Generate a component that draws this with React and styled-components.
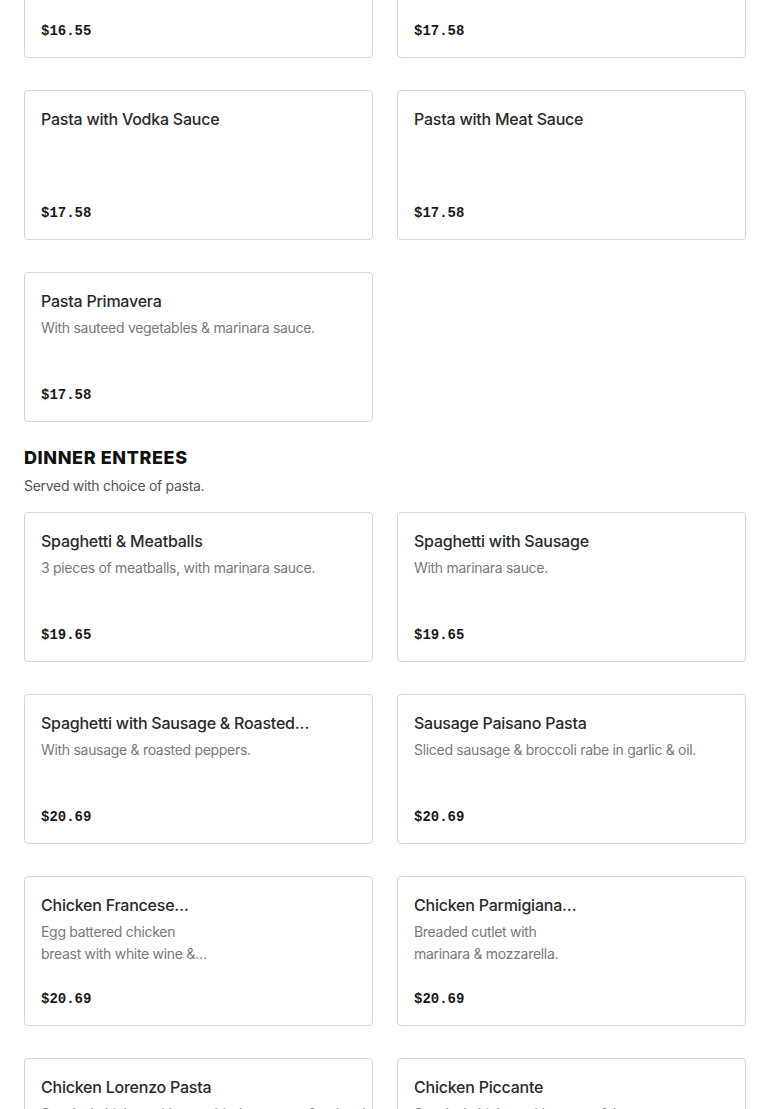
import React from 'react'
import styled, { createGlobalStyle } from 'styled-components'

const GlobalStyle = createGlobalStyle`
  body{
    margin:0;
    background:#fff;
    font-family:Inter, "Noto Sans", sans-serif;
    color:#191919;
  }
`;

const pastas = [
  { title: 'Pasta with Garlic & Oil', desc: '', price: '$16.55' },
  { title: 'Pasta with Marinara Sauce', desc: '', price: '$17.58' },
  { title: 'Pasta with Vodka Sauce', desc: '', price: '$17.58' },
  { title: 'Pasta with Meat Sauce', desc: '', price: '$17.58' },
  { title: 'Pasta Primavera', desc: 'With sauteed vegetables & marinara sauce.', price: '$17.58' },
]

const entrees = [
  { title: 'Spaghetti & Meatballs', desc: '3 pieces of meatballs, with marinara sauce.', price: '$19.65' },
  { title: 'Spaghetti with Sausage', desc: 'With marinara sauce.', price: '$19.65' },
  { title: 'Spaghetti with Sausage & Roasted…', desc: 'With sausage & roasted peppers.', price: '$20.69' },
  { title: 'Sausage Paisano Pasta', desc: 'Sliced sausage & broccoli rabe in garlic & oil.', price: '$20.69' },
  { title: 'Chicken Francese…', desc: ['Egg battered chicken', 'breast with white wine &…'], price: '$20.69' },
  { title: 'Chicken Parmigiana…', desc: ['Breaded cutlet with', 'marinara & mozzarella.'], price: '$20.69' },
  { title: 'Chicken Lorenzo Pasta', desc: 'Sautéed chicken with sun-dried tomatoes & spinach.', price: '$20.69' },
  { title: 'Chicken Piccante', desc: 'Sautéed chicken with capers & lemon sauce.', price: '$20.69' },
]

function ItemCard({ item }) {
  const lines = Array.isArray(item.desc) ? item.desc : item.desc ? [item.desc] : []
  return (
    <Card>
      <Title>{item.title}</Title>
      {lines.length > 0 && (
        <Desc>
          {lines.map((l, i) => <span key={i}>{l}</span>)}
        </Desc>
      )}
      <Price>{item.price}</Price>
    </Card>
  )
}

function App() {
  return (
    <>
      <GlobalStyle />
      <Page>
        <Section>
          <Grid>
            {pastas.map(p => <ItemCard key={p.title} item={p} />)}
          </Grid>
        </Section>
        <Section>
          <Heading>Dinner Entrees</Heading>
          <Sub>Served with choice of pasta.</Sub>
          <Grid className='entrees'>
            {entrees.map(p => <ItemCard key={p.title} item={p} />)}
          </Grid>
        </Section>
      </Page>
    </>
  )
}

const Page = styled.main`
    margin-top:-92px;
    padding:0 24px 40px;
    display:flex;
    flex-direction:column;
    gap:24px;
`;

const Section = styled.section`
    display:flex;
    flex-direction:column;
    .entrees{
        margin-top:16px;
    }
`;

const Heading = styled.h2`
    margin:0;
    font-size:18px;
    line-height:24px;
    font-weight:800;
    text-transform:uppercase;
    letter-spacing:0.6px;
    color:#111;
`;

const Sub = styled.p`
    margin:6px 0 0;
    font-size:14px;
    line-height:20px;
    letter-spacing:-0.3px;
    color:#555;
`;

const Grid = styled.div`
    display:grid;
    grid-template-columns:1fr 1fr;
    column-gap:24px;
    row-gap:32px;
`;

const Card = styled.div`
    box-sizing:border-box;
    height:150px;
    border:1px solid #d6d6d6;
    border-radius:4px;
    padding:16px 16px 15px;
    display:flex;
    flex-direction:column;
    overflow:hidden;
`;

const Title = styled.div`
    font-size:16px;
    line-height:24px;
    font-weight:500;
    letter-spacing:-0.23px;
    color:#2a2a2a;
    white-space:nowrap;
    overflow:hidden;
`;

const Desc = styled.div`
    margin-top:4px;
    font-size:14px;
    line-height:22px;
    letter-spacing:-0.3px;
    color:#797979;
    display:flex;
    flex-direction:column;
    span{
        white-space:nowrap;
    }
`;

const Price = styled.div`
    margin-top:auto;
    font-family:"Liberation Mono", "DejaVu Sans Mono", monospace;
    font-size:14px;
    line-height:22px;
    font-weight:700;
    color:#191919;
`;

export default App
